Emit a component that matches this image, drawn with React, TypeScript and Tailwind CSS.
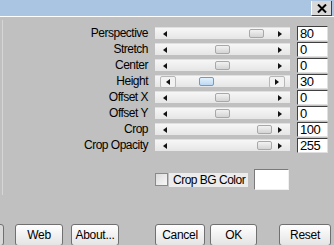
import React from "react";

type Row = { label: string; value: string; pos: number; active?: boolean };

const rows: Row[] = [
  { label: "Perspective", value: "80", pos: 94 },
  { label: "Stretch", value: "0", pos: 60 },
  { label: "Center", value: "0", pos: 60 },
  { label: "Height", value: "30", pos: 44, active: true },
  { label: "Offset X", value: "0", pos: 60 },
  { label: "Offset Y", value: "0", pos: 60 },
  { label: "Crop", value: "100", pos: 102 },
  { label: "Crop Opacity", value: "255", pos: 102 },
];

const Arrow = ({ dir, boxed }: { dir: "left" | "right"; boxed?: boolean }) => (
  <div
    className={
      "flex items-center justify-center h-[12px] " +
      (boxed ? "w-[16px] border border-[#b8b8b8] bg-[#f2f2f2] rounded-[2px]" : "w-[10px]")
    }
  >
    <svg width="4" height="6" viewBox="0 0 4 6">
      {dir === "left" ? <polygon points="4,0 4,6 0,3" fill="#111" /> : <polygon points="0,0 0,6 4,3" fill="#111" />}
    </svg>
  </div>
);

const Slider = ({ pos, active }: { pos: number; active?: boolean }) => (
  <div className="relative w-[135px] h-[12px] bg-gradient-to-b from-[#f6f6f6] to-[#e6e6e6] border-t border-[#e0e0e0] flex items-center justify-between px-[5px]">
    <Arrow dir="left" boxed={active} />
    <Arrow dir="right" boxed={active} />
    <div
      className={
        "absolute top-[1px] w-[15px] h-[9px] rounded-[2px] border " +
        (active
          ? "bg-gradient-to-b from-[#e4f1fc] to-[#bcd9f3] border-[#6c9ccf]"
          : "bg-gradient-to-b from-[#f2f2f2] to-[#d4d4d4] border-[#a8a8a8]")
      }
      style={{ left: pos }}
    />
  </div>
);

const Button = ({ label, width }: { label: string; width: number }) => (
  <div
    className="h-[22px] rounded-[3px] border border-[#707070] bg-gradient-to-b from-[#ffffff] to-[#e4e4e4] flex items-center justify-center text-black text-[12px] tracking-[-0.3px]"
    style={{ width }}
  >
    {label}
  </div>
);

export default function App() {
  return (
    <div className="w-[334px] h-[245px] overflow-hidden bg-[#c0c0c0] font-['Liberation_Sans',Arial,sans-serif] text-[12px] text-black leading-none relative">
      {/* title bar */}
      <div className="h-[16px] bg-[#a9c5e2] flex justify-end items-end pr-[2px]">
        <div className="w-[21px] h-[15px] bg-[#d8d8d8] border-l border-b border-l-white border-b-[#404040] border-r border-r-[#404040] flex items-center justify-center">
          <svg width="10" height="9" viewBox="0 0 10 9">
            <path d="M1 0.5 L9 8.5 M9 0.5 L1 8.5" stroke="#000" strokeWidth="2" />
          </svg>
        </div>
      </div>
      <div className="h-[1px] bg-white" />

      {/* left frame edge */}
      <div className="absolute left-[2px] top-[20px] w-[1px] h-[175px] bg-[#d6d6d6]" />

      <div className="pt-[8px]">
        {rows.map((r) => (
          <div key={r.label} className="h-[16px] flex items-center">
            <div className="w-[148px] text-right tracking-[-0.5px]">{r.label}</div>
            <div className="ml-[7px]">
              <Slider pos={r.pos} active={r.active} />
            </div>
            <div className="ml-[7px] w-[31px] h-[15px] bg-white border border-t-[#404040] border-l-[#404040] border-r-[#e0e0e0] border-b-[#e0e0e0] flex items-center pl-[2px] text-[13px] tracking-[-0.5px]">
              {r.value}
            </div>
          </div>
        ))}

        <div className="mt-[16px] h-[21px] flex items-center">
          <div className="ml-[155px] w-[13px] h-[13px] bg-gradient-to-br from-[#dcdcdc] to-[#f8f8f8] border border-[#8a8a8a]" />
          <div className="ml-[1px] w-[79px] h-[14px] bg-[#ececec] flex items-center pl-[4px] tracking-[-0.5px]">Crop BG Color</div>
          <div className="ml-[6px] w-[35px] h-[21px] bg-white border border-t-[#7a7a7a] border-l-[#7a7a7a] border-r-[#f0f0f0] border-b-[#f0f0f0]" />
        </div>

        <div className="mt-[34px] flex items-start">
          <div className="ml-[-40px] w-[44px] h-[22px] rounded-[3px] border border-[#707070] bg-[#d8d8d8]" />
          <div className="ml-[11px]">
            <Button label="Web" width={48} />
          </div>
          <div className="ml-[8px]">
            <Button label="About..." width={48} />
          </div>
          <div className="ml-[36px]">
            <Button label="Cancel" width={50} />
          </div>
          <div className="ml-[5px]">
            <Button label="OK" width={47} />
          </div>
          <div className="ml-[22px]">
            <Button label="Reset" width={52} />
          </div>
        </div>
      </div>
    </div>
  );
}
